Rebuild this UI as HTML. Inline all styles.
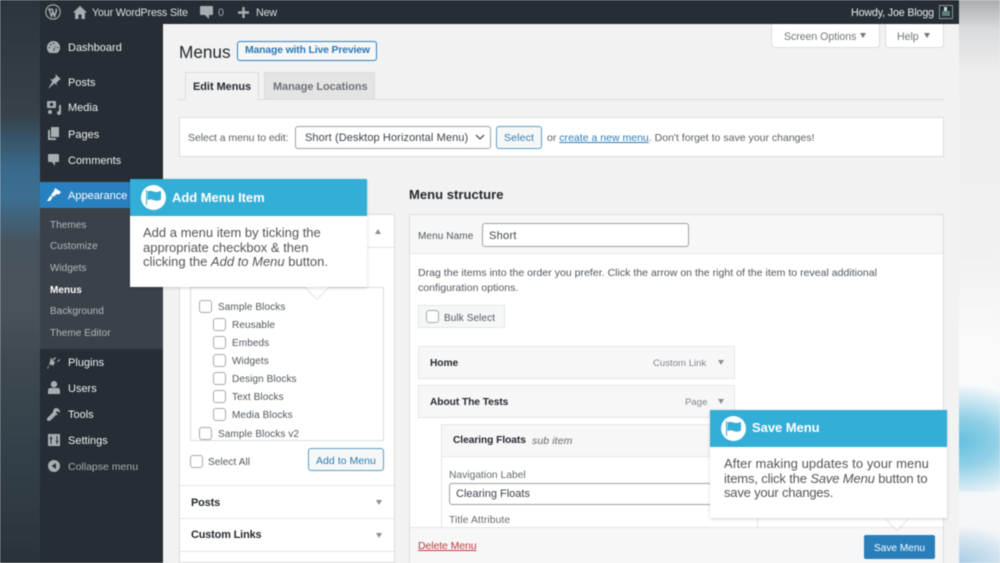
<!DOCTYPE html>
<html><head><meta charset="utf-8"><style>
*{box-sizing:border-box}
html,body{margin:0;padding:0;width:1000px;height:563px;overflow:hidden;background:#f3f3f4}
body{position:relative;font-family:"Liberation Sans",sans-serif}
.a,.t{position:absolute}
.t{white-space:nowrap;line-height:16px;font-size:10px;letter-spacing:.1px;color:#50575e}
.m{color:#eef0f1;font-size:11px;letter-spacing:0}
.s{color:#b6babe;font-size:10px;letter-spacing:.05px}
.bar{color:#dfe1e3;font-size:10.7px;letter-spacing:-.15px}
.bd{color:#23282d;font-weight:bold;font-size:10.2px;letter-spacing:-.05px}
.cb{position:absolute;width:13px;height:13px;border:1px solid #a5a9ad;border-radius:3px;background:#fff}
.i{position:absolute;fill:#a9aeb2}
.tri{position:absolute;width:0;height:0;border-left:3.5px solid transparent;border-right:3.5px solid transparent;border-top:5px solid #8c8f94}
.b{position:absolute;background:#fff;border:1px solid #dcdcde}
.call{position:absolute;background:#fff;box-shadow:0 1px 3px rgba(0,0,0,.18)}
.call .h{position:absolute;left:0;top:0;right:0;height:37px;background:#33aed6;color:#fff;font-weight:bold;font-size:13px;letter-spacing:-.04px;line-height:37px}
.call .p{position:absolute;font-family:"Liberation Sans",sans-serif;font-size:13px;line-height:14.6px;color:#555;letter-spacing:0;white-space:nowrap}
.flag{position:absolute;width:25px;height:25px;border-radius:50%;background:#fff}
#wrap{position:absolute;inset:0;filter:blur(.4px)}
</style></head><body><div id="wrap">

<div class="a" style="left:0;top:0;width:40px;height:563px;background:linear-gradient(180deg,#2c353d 0,#364149 20%,#3a6a8b 30%,#3c6f92 35%,#47545f 43%,#4a5259 55%,#3d4850 65%,#333f48 82%,#2a333b 100%)"></div>
<div class="a" style="left:959px;top:0;width:41px;height:563px;background:linear-gradient(180deg,#a9adb0 0,#d9dadb 5%,#eeeeef 13%,#f1f1f2 45%,#fbfbfc 62%,#f5f7f9 90%,#f3f6f8 100%)"></div>
<div class="a" style="left:959px;top:380px;width:41px;height:112px;background:radial-gradient(ellipse 90px 58px at 0 55%,#66c0df 0,#8fcfe6 40%,rgba(240,244,246,0) 100%)"></div>
<div class="a" style="left:959px;top:525px;width:41px;height:38px;background:radial-gradient(ellipse 70px 38px at 0 100%,#a9cde6 0,#cfe1ee 55%,rgba(243,246,248,0) 100%)"></div>

<div class="a" style="left:163px;top:24px;width:796px;height:539px;background:#f2f2f3"></div>
<div class="a" style="left:40px;top:0;width:123px;height:563px;background:#262d34"></div>
<div class="a" style="left:40px;top:208px;width:123px;height:141px;background:#3a4149"></div>
<div class="a" style="left:40px;top:182px;width:123px;height:26px;background:#2780c0"></div>
<div class="a" style="left:40px;top:0;width:919px;height:24px;background:#262d34"></div>

<!-- admin bar icons -->
<svg class="i" style="left:45px;top:4px" width="16" height="16" viewBox="0 0 16 16"><circle cx="8" cy="8" r="7.200" fill="none" stroke="#a9aeb2" stroke-width="1.100"/><path d="M3 5.300h4.800M4.200 5.300l2.300 7 1.500-4.400M7.200 5.300l2.400 7 1.700-5c.4-1.300 0-2-.7-2.500" fill="none" stroke="#a9aeb2" stroke-width="1.500"/></svg>
<svg class="i" style="left:73px;top:6px" width="14" height="13" viewBox="0 0 14 13"><path d="M7 0L0 6.500h2V13h3.500V8.500h3V13H12V6.500h2z"/></svg>
<div class="t bar" style="left:92px;top:5px">Your WordPress Site</div>
<svg class="i" style="left:200px;top:6px" width="13" height="13" viewBox="0 0 13 13"><path d="M1 0h11a1 1 0 0 1 1 1v7a1 1 0 0 1-1 1H9v4L5 9H1a1 1 0 0 1-1-1V1a1 1 0 0 1 1-1z"/></svg>
<div class="t bar" style="left:218px;top:5px;color:#a4a9ad">0</div>
<svg class="i" style="left:238px;top:7px" width="11" height="11" viewBox="0 0 11 11"><path d="M4.300 0h2.400v4.300H11v2.400H6.700V11H4.300V6.700H0V4.300h4.300z"/></svg>
<div class="t bar" style="left:256px;top:5px">New</div>
<div class="t bar" style="left:851px;top:5px;color:#eceeef">Howdy, Joe Blogg</div>
<div class="a" style="left:939px;top:5px;width:14px;height:14px;border:1px solid #8f9599;background:#1c2c30"></div>
<div class="a" style="left:944px;top:7px;width:3px;height:5px;background:#d5d9da"></div>
<div class="a" style="left:942px;top:11px;width:8px;height:5px;background:#5d7f80"></div>

<!-- sidebar -->
<svg class="i" style="left:47px;top:41px" width="13" height="12" viewBox="0 0 13 12"><path fill-rule="evenodd" d="M6.500 0a6.500 6.500 0 0 0-5 10.700L2.500 12h8l1-1.300A6.500 6.500 0 0 0 6.500 0zM6 1.600h1.100v1.500H6zM2.900 3.500l.8-.8 1 1-.8.8zM1.700 7V6h1.500v1zM9.800 6h1.500v1H9.800zM6 9.600L8.700 3.900 7.200 9.800z"/></svg>
<div class="t m" style="left:68px;top:40px">Dashboard</div>
<svg class="i" style="left:47px;top:74px" width="14" height="15" viewBox="0 0 14 15"><path d="M8.500 0l5.500 5.500-1.500.3L9.500 8.800l.3 2.700-2.300-2.300L1 15 5.300 7.500 3 5.200l2.800.3 3-2.800z"/></svg>
<div class="t m" style="left:68px;top:75px">Posts</div>
<svg class="i" style="left:47px;top:100px" width="14" height="15" viewBox="0 0 14 15"><path fill-rule="evenodd" d="M1 1h7a1 1 0 0 1 1 1v5a1 1 0 0 1-1 1H1a1 1 0 0 1-1-1V2a1 1 0 0 1 1-1zm3.500 1.700a1.800 1.800 0 1 0 .01 0zM14 5v8a2 2 0 1 1-2-2V5zM3 10a2 2 0 1 1 0 4 2 2 0 0 1 0-4z"/></svg>
<div class="t m" style="left:68px;top:100px">Media</div>
<svg class="i" style="left:48px;top:127px" width="11" height="13" viewBox="0 0 11 13"><path d="M3 0h8v10H3zM0 3h2v8h6v2H0z"/></svg>
<div class="t m" style="left:68px;top:127px">Pages</div>
<svg class="i" style="left:48px;top:154px" width="11" height="12" viewBox="0 0 11 12"><path d="M1 0h9a1 1 0 0 1 1 1v6a1 1 0 0 1-1 1H7v4L4 8H1a1 1 0 0 1-1-1V1a1 1 0 0 1 1-1z"/></svg>
<div class="t m" style="left:68px;top:153px">Comments</div>
<svg class="i" style="left:47px;top:188px;fill:#fff" width="14" height="13" viewBox="0 0 14 13"><path d="M8 0l6 4-2 2.500-2-.5L6 9 4 7l3-4zM3.500 7.500L5.500 9.500 3 13H0z"/></svg>
<div class="t m" style="left:68px;top:188px;color:#fff">Appearance</div>
<div class="t s" style="left:50px;top:218px">Themes</div>
<div class="t s" style="left:50px;top:239px">Customize</div>
<div class="t s" style="left:50px;top:261px">Widgets</div>
<div class="t s" style="left:50px;top:283px;color:#fff;font-weight:bold">Menus</div>
<div class="t s" style="left:50px;top:304px">Background</div>
<div class="t s" style="left:50px;top:326px">Theme Editor</div>
<svg class="i" style="left:47px;top:355px" width="13" height="14" viewBox="0 0 13 14"><path d="M4 2l1 3 3-3 1 1-3 3 2 1-1.500 3.500-4-1L1 14l-1-1 2-2.500zM12 4l1 1-2 2h-1z"/></svg>
<div class="t m" style="left:68px;top:355px">Plugins</div>
<svg class="i" style="left:48px;top:381px" width="12" height="13" viewBox="0 0 12 13"><path d="M6 0a3 3 0 1 1 0 6.500A3 3 0 0 1 6 0zM2 7h8c1.500 0 2 1.500 2 3v3H0v-3c0-1.500.5-3 2-3z"/></svg>
<div class="t m" style="left:68px;top:381px">Users</div>
<svg class="i" style="left:47px;top:408px" width="13" height="13" viewBox="0 0 13 13"><path d="M9 0a4 4 0 0 1 4 4c0 .4 0 .6-.1.9L10.500 3 9 4.500l1.900 2.400c-.6.200-1.300.2-1.900.1L2.800 13 0 12.500V10.500L6.100 4C5.800 2 7.500 0 9 0z"/></svg>
<div class="t m" style="left:68px;top:407px">Tools</div>
<svg class="i" style="left:48px;top:434px" width="12" height="12" viewBox="0 0 12 12"><path fill-rule="evenodd" d="M0 0h12v12H0zM2.500 2v2h-1v1h1v5h1V5h1V4h-1V2zm6 0v5h-1v1h1v2h1V8h1V7h-1V2z"/></svg>
<div class="t m" style="left:68px;top:433px">Settings</div>
<svg class="i" style="left:48px;top:460px" width="12" height="12" viewBox="0 0 12 12"><path fill-rule="evenodd" d="M6 0a6 6 0 1 1 0 12A6 6 0 0 1 6 0zM8 3L3.500 6 8 9z"/></svg>
<div class="t" style="left:68px;top:459px;color:#a9aeb2;font-size:10.500px;letter-spacing:0">Collapse menu</div>

<!-- screen options -->
<div class="b" style="left:771px;top:24px;width:109px;height:24px;border-top:0;border-radius:0 0 4px 4px"></div>
<div class="t" style="left:784px;top:29px;color:#72777c;font-size:10.600px;letter-spacing:-.05px">Screen Options</div>
<div class="tri" style="left:860px;top:33px;border-top-color:#72777c"></div>
<div class="b" style="left:885px;top:24px;width:59px;height:24px;border-top:0;border-radius:0 0 4px 4px"></div>
<div class="t" style="left:897px;top:29px;color:#72777c;font-size:10.600px;letter-spacing:-.05px">Help</div>
<div class="tri" style="left:924px;top:33px;border-top-color:#72777c"></div>

<!-- heading -->
<div class="t" style="left:179px;top:40px;font-size:17.200px;line-height:24px;color:#23282d;letter-spacing:0">Menus</div>
<div class="a" style="left:237px;top:41px;width:140px;height:20px;border:1px solid #2f83bb;border-radius:3px;background:#f6f7f7"></div>
<div class="t" style="left:245px;top:43px;color:#2878b8;font-weight:bold;font-size:10.400px;letter-spacing:-.14px">Manage with Live Preview</div>

<!-- tabs -->
<div class="a" style="left:179px;top:99px;width:765px;height:1px;background:#dcdcde"></div>
<div class="a" style="left:185px;top:72px;width:74px;height:28px;background:#f2f2f3;border:1px solid #dcdcde;border-bottom:0"></div>
<div class="t" style="left:193px;top:79px;color:#23282d;font-weight:bold;font-size:10.900px;letter-spacing:0">Edit Menus</div>
<div class="a" style="left:264px;top:72px;width:111px;height:27px;background:#e4e4e5;border:1px solid #dcdcde;border-bottom:0"></div>
<div class="t" style="left:273px;top:79px;color:#6c7176;font-weight:bold;font-size:10.900px;letter-spacing:-.03px">Manage Locations</div>

<!-- select bar -->
<div class="b" style="left:179px;top:117px;width:765px;height:40px"></div>
<div class="t" style="left:188px;top:130px;color:#5b6065;font-size:10.500px;letter-spacing:-.05px">Select a menu to edit:</div>
<div class="a" style="left:295px;top:126px;width:196px;height:23px;background:#fff;border:1px solid #9da1a5;border-radius:3px"></div>
<div class="t" style="left:305px;top:130px;color:#3c434a;font-size:11px;letter-spacing:.1px">Short (Desktop Horizontal Menu)</div>
<svg class="a" style="left:475px;top:134px" width="10" height="7" viewBox="0 0 10 7"><path d="M1 1l4 4 4-4" fill="none" stroke="#50575e" stroke-width="1.300"/></svg>
<div class="a" style="left:496px;top:126px;width:46px;height:23px;background:#f6f7f7;border:1px solid #5b9cc9;border-radius:3px"></div>
<div class="t" style="left:504px;top:130px;color:#2b7bb5;font-size:10.500px;letter-spacing:.15px">Select</div>
<div class="t" style="left:547px;top:130px;color:#5b6065;font-size:10.500px;letter-spacing:.01px">or <span style="color:#2b7bb5;text-decoration:underline">create a new menu</span>. Don't forget to save your changes!</div>

<!-- left column box -->
<div class="b" style="left:179px;top:214px;width:216px;height:349px"></div>
<div class="tri" style="left:375px;top:229px;border-top:0;border-bottom:5px solid #8c8f94"></div>
<div class="a" style="left:180px;top:247px;width:214px;height:1px;background:#e4e4e6"></div>
<div class="b" style="left:190px;top:287px;width:194px;height:154px"></div>
<div class="cb" style="left:199px;top:300px"></div><div class="t" style="left:218px;top:300px">Sample Blocks</div>
<div class="cb" style="left:213px;top:318px"></div><div class="t" style="left:232px;top:318px">Reusable</div>
<div class="cb" style="left:213px;top:336px"></div><div class="t" style="left:232px;top:336px">Embeds</div>
<div class="cb" style="left:213px;top:354px"></div><div class="t" style="left:232px;top:354px">Widgets</div>
<div class="cb" style="left:213px;top:372px"></div><div class="t" style="left:232px;top:372px">Design Blocks</div>
<div class="cb" style="left:213px;top:390px"></div><div class="t" style="left:232px;top:390px">Text Blocks</div>
<div class="cb" style="left:213px;top:408px"></div><div class="t" style="left:232px;top:408px">Media Blocks</div>
<div class="cb" style="left:199px;top:427px"></div><div class="t" style="left:218px;top:427px">Sample Blocks v2</div>
<div class="cb" style="left:190px;top:455px"></div><div class="t" style="left:208px;top:455px">Select All</div>
<div class="a" style="left:308px;top:448px;width:76px;height:23px;background:#f6f7f7;border:1px solid #5b9cc9;border-radius:3px"></div>
<div class="t" style="left:316px;top:453px;color:#2b7bb5;font-size:10.500px;letter-spacing:.03px">Add to Menu</div>
<div class="a" style="left:180px;top:485px;width:214px;height:1px;background:#e4e4e6"></div>
<div class="t" style="left:191px;top:495px;color:#23282d;font-weight:bold;font-size:10.900px;letter-spacing:-.13px">Posts</div>
<div class="tri" style="left:376px;top:500px"></div>
<div class="a" style="left:180px;top:518px;width:214px;height:1px;background:#e4e4e6"></div>
<div class="t" style="left:191px;top:527px;color:#23282d;font-weight:bold;font-size:10.900px;letter-spacing:-.13px">Custom Links</div>
<div class="tri" style="left:376px;top:533px"></div>
<div class="a" style="left:180px;top:551px;width:214px;height:1px;background:#e4e4e6"></div>

<!-- menu structure -->
<div class="t" style="left:409px;top:187px;font-size:13px;font-weight:bold;color:#23282d;letter-spacing:.04px">Menu structure</div>
<div class="b" style="left:409px;top:214px;width:535px;height:349px"></div>
<div class="a" style="left:410px;top:215px;width:533px;height:39px;background:#f7f7f8;border-bottom:1px solid #e6e6e8"></div>
<div class="t" style="left:418px;top:229px">Menu Name</div>
<div class="a" style="left:482px;top:223px;width:207px;height:24px;background:#fff;border:1px solid #9da1a5;border-radius:3px"></div>
<div class="t" style="left:489px;top:228px;font-size:11px;color:#3c434a;letter-spacing:.3px">Short</div>
<div class="t" style="left:418px;top:266px;font-size:10.500px;line-height:15px;letter-spacing:.025px">Drag the items into the order you prefer. Click the arrow on the right of the item to reveal additional<br>configuration options.</div>
<div class="a" style="left:418px;top:305px;width:87px;height:23px;background:#f6f7f7;border:1px solid #e4e4e6"></div>
<div class="cb" style="left:426px;top:310px"></div>
<div class="t" style="left:444px;top:311px">Bulk Select</div>

<div class="a" style="left:418px;top:346px;width:317px;height:33px;background:#f7f7f8;border:1px solid #e4e4e6"></div>
<div class="t bd" style="left:430px;top:356px">Home</div>
<div class="t" style="left:653px;top:356px;color:#80858a;font-size:9.600px;letter-spacing:0">Custom Link</div>
<div class="tri" style="left:718px;top:360px"></div>
<div class="a" style="left:418px;top:385px;width:317px;height:33px;background:#f7f7f8;border:1px solid #e4e4e6"></div>
<div class="t bd" style="left:430px;top:395px">About The Tests</div>
<div class="t" style="left:685px;top:395px;color:#80858a;font-size:9.600px;letter-spacing:0">Page</div>
<div class="tri" style="left:718px;top:399px"></div>

<div class="a" style="left:441px;top:424px;width:317px;height:110px;background:#fff;border:1px solid #e4e4e6"></div>
<div class="a" style="left:442px;top:425px;width:315px;height:32px;background:#f7f7f8;border-bottom:1px solid #e6e6e8"></div>
<div class="t bd" style="left:453px;top:433px">Clearing Floats</div>
<div class="t" style="left:532px;top:433px;color:#646970;font-style:italic;font-size:10.500px;letter-spacing:.1px">sub item</div>
<div class="t" style="left:449px;top:468px;font-size:10.300px;letter-spacing:0;color:#646970">Navigation Label</div>
<div class="a" style="left:449px;top:483px;width:280px;height:22px;background:#fff;border:1px solid #9da1a5;border-radius:3px"></div>
<div class="t" style="left:456px;top:486px;font-size:11px;color:#3c434a;letter-spacing:0">Clearing Floats</div>
<div class="t" style="left:449px;top:513px;font-size:10.300px;letter-spacing:.1px;color:#646970">Title Attribute</div>

<div class="a" style="left:410px;top:527px;width:533px;height:36px;background:#f7f7f8;border-top:1px solid #e4e4e6"></div>
<div class="t" style="left:418px;top:538px;color:#c0393f;font-size:10.500px;letter-spacing:-.09px;text-decoration:underline">Delete Menu</div>
<div class="a" style="left:864px;top:535px;width:71px;height:24px;background:#2a7fba;border-radius:2px"></div>
<div class="t" style="left:874px;top:541px;color:#fff;font-size:10px;letter-spacing:.05px">Save Menu</div>

<!-- callouts -->
<div class="a" style="left:309px;top:279px;width:16px;height:16px;background:#fff;transform:rotate(45deg);box-shadow:1px 1px 2px rgba(0,0,0,.12)"></div>
<div class="call" style="left:130px;top:179px;width:237px;height:108px">
 <div class="h"><span style="position:absolute;left:42px">Add Menu Item</span></div>
 <div class="flag" style="left:11px;top:6px"></div>
 <svg class="a" style="left:15px;top:11px" width="17" height="15" viewBox="0 0 17 15"><path d="M1 0h1v15H1z" fill="#33aed6"/><path d="M2.500 1.500c2-1 4-.8 6 0s4 .6 6-.3c1-.3 1.500 0 1.500.8v7.500c-2.500 1.500-5 1.500-7.500.5s-4-.8-6 .2z" fill="#33aed6"/></svg>
 <div class="p" style="left:13px;top:47px">Add a menu item by ticking the<br>appropriate checkbox &amp; then<br>clicking the <i>Add to Menu</i> button.</div>
</div>
<div class="a" style="left:889px;top:510px;width:16px;height:16px;background:#fff;transform:rotate(45deg);box-shadow:1px 1px 2px rgba(0,0,0,.12)"></div>
<div class="call" style="left:710px;top:410px;width:237px;height:108px">
 <div class="h" style="line-height:36px"><span style="position:absolute;left:42px">Save Menu</span></div>
 <div class="flag" style="left:11px;top:6px"></div>
 <svg class="a" style="left:15px;top:11px" width="17" height="15" viewBox="0 0 17 15"><path d="M1 0h1v15H1z" fill="#33aed6"/><path d="M2.500 1.500c2-1 4-.8 6 0s4 .6 6-.3c1-.3 1.500 0 1.500.8v7.500c-2.500 1.500-5 1.500-7.500.5s-4-.8-6 .2z" fill="#33aed6"/></svg>
 <div class="p" style="left:14px;top:47px"><span style="letter-spacing:.08px">After making updates to your menu</span><br><span style="letter-spacing:-.15px">items, click the <i>Save Menu</i> button to</span><br><span style="letter-spacing:-.2px">save your changes.</span></div>
</div>

</div></body></html>
